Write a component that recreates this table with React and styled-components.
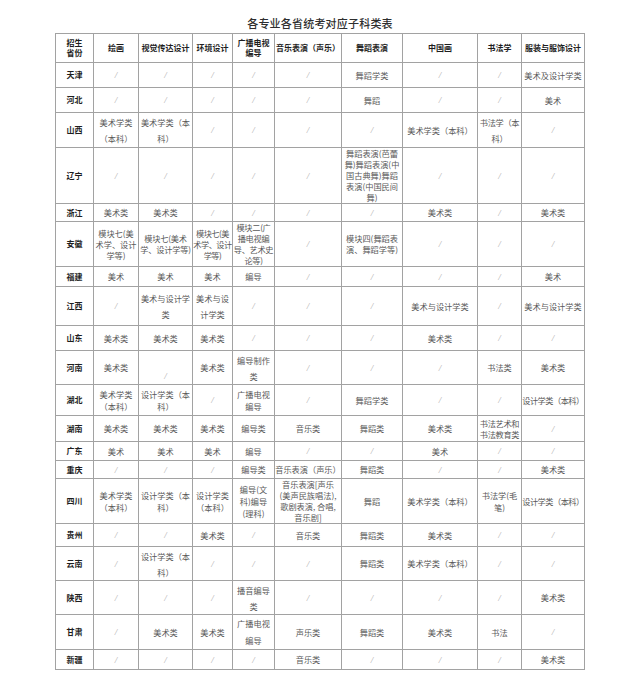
import React from "react";
import styled, { createGlobalStyle } from "styled-components";

const GlobalStyle = createGlobalStyle`
  html, body { margin: 0; padding: 0; background: #ffffff; }
  body { font-family: "Noto Sans CJK SC", "Noto Sans", sans-serif; }
`;

const Page = styled.div`
  width: 640px;
  min-height: 689px;
  background: #fff;
`;

const Title = styled.h1`
  margin: 0 0 4px;
  padding-top: 17px;
  font-size: 11px;
  line-height: 12px;
  font-weight: 500;
  letter-spacing: 0.2px;
  color: #2e2e2e;
  text-align: center;
`;

const Table = styled.table`
  border-collapse: collapse;
  table-layout: fixed;
  width: 529px;
  margin: 0 auto;
`;

const Col = styled.col`
  width: ${(p) => p.$w}px;
`;

const Row = styled.tr`
  height: ${(p) => p.$h}px;
`;

const HeadCell = styled.th`
  border: 1px solid #a2a2a2;
  padding: 0;
  font-size: 8px;
  line-height: 10px;
  font-weight: 700;
  color: #1e1e1e;
  text-align: center;
  vertical-align: middle;
  white-space: nowrap;
  overflow: hidden;
`;

const ProvCell = styled.th`
  border: 1px solid #a2a2a2;
  padding: 0;
  font-size: 8px;
  line-height: 10px;
  font-weight: 700;
  color: #1e1e1e;
  text-align: center;
  vertical-align: middle;
`;

const Cell = styled.td`
  border: 1px solid #a2a2a2;
  padding: 0;
  font-size: 8.2px;
  line-height: ${(p) => p.$lh}px;
  letter-spacing: ${(p) => p.$ls}px;
  color: #5a5a5a;
  text-align: center;
  vertical-align: middle;
  white-space: nowrap;
  overflow: hidden;
`;

const Line = styled.div`
  min-height: ${(p) => p.$lh}px;
`;

const Slash = styled.span`
  color: #a8a8a8;
  font-family: "Liberation Serif", serif;
  font-style: italic;
  font-size: 9px;
  letter-spacing: 0;
`;

const S = "/";

const headers = [
  ["招生", "省份"],
  ["绘画"],
  ["视觉传达设计"],
  ["环境设计"],
  ["广播电视", "编导"],
  ["音乐表演（声乐）"],
  ["舞蹈表演"],
  ["中国画"],
  ["书法学"],
  ["服装与服饰设计"],
];

const widths = [38, 45, 54, 40, 42, 67, 61, 75, 44, 63];

const L = (lines, lh = 11, ls = 0) => ({ lines, lh, ls });
const DESIGN = L(["设计学类（本科）"], 11, -0.5);

const rows = [
  { p: "天津", h: 25, c: [S, S, S, S, S, "舞蹈学类", S, S, "美术及设计学类"] },
  { p: "河北", h: 25, c: [S, S, S, S, S, "舞蹈", S, S, "美术"] },
  {
    p: "山西",
    h: 35,
    c: [L(["美术学类", "（本科）"], 16), L(["美术学类（本", "科）"], 16), S, S, S, S, "美术学类（本科）", L(["书法学（本", "科）"], 16, -0.3), S],
  },
  {
    p: "辽宁",
    h: 55,
    c: [S, S, S, S, S, L(["舞蹈表演(芭蕾", "舞)舞蹈表演(中", "国古典舞)舞蹈", "表演(中国民间", "舞)"]), S, S, S],
  },
  { p: "浙江", h: 18, c: ["美术类", "美术类", S, S, S, S, "美术类", S, "美术类"] },
  {
    p: "安徽",
    h: 44,
    c: [
      L(["模块七(美", "术学、设计", "学等)"]),
      L(["模块七(美术", "学、设计学等)"], 11, -0.2),
      L(["模块七(美", "术学、设计", "学等)"], 11, -0.5),
      L(["模块二(广", "播电视编", "导、艺术史", "论等)"], 11, -0.3),
      S,
      L(["模块四(舞蹈表", "演、舞蹈学等)"]),
      S,
      S,
      S,
    ],
  },
  { p: "福建", h: 20, c: ["美术", "美术", "美术", "编导", S, S, S, S, "美术"] },
  {
    p: "江西",
    h: 39,
    c: [S, L(["美术与设计学", "类"], 16), L(["美术与设", "计学类"], 16), S, S, S, "美术与设计学类", S, "美术与设计学类"],
  },
  { p: "山东", h: 25, c: ["美术类", "美术类", "美术类", S, S, S, "美术类", S, S] },
  {
    p: "河南",
    h: 34,
    c: ["美术类", L(["", "/"], 16), "美术类", L(["编导制作", "类"], 16), S, S, S, "书法类", "美术类"],
  },
  {
    p: "湖北",
    h: 31,
    c: [L(["美术学类", "（本科）"], 12), L(["设计学类（本", "科）"], 12), S, L(["广播电视", "编导"], 12), S, "舞蹈学类", S, S, DESIGN],
  },
  {
    p: "湖南",
    h: 26,
    c: ["美术类", "美术类", "美术类", "编导类", "音乐类", "舞蹈类", "美术类", L(["书法艺术和", "书法教育类"], 11, -0.3), S],
  },
  { p: "广东", h: 19, c: ["美术", "美术", "美术", "编导", S, S, "美术", S, S] },
  { p: "重庆", h: 18, c: [S, S, S, "编导类", "音乐表演（声乐）", "舞蹈类", S, S, "美术类"] },
  {
    p: "四川",
    h: 44,
    c: [
      L(["美术学类", "（本科）"], 12),
      L(["设计学类（本", "科）"], 12),
      L(["设计学类", "（本科）"], 12),
      L(["编导(文", "科)编导", "(理科)"], 12),
      L(["音乐表演[声乐", "(美声民族唱法),", "歌剧表演, 合唱,", "音乐剧]"]),
      "舞蹈",
      "美术学类（本科）",
      L(["书法学(毛", "笔)"], 12),
      DESIGN,
    ],
  },
  { p: "贵州", h: 23, c: [S, S, "美术类", S, "音乐类", "舞蹈类", "美术类", S, S] },
  { p: "云南", h: 34, c: [S, L(["设计学类（本", "科）"], 16), S, S, S, "舞蹈类", "美术学类（本科）", S, S] },
  { p: "陕西", h: 34, c: [S, S, S, L(["播音编导", "类"], 16), S, S, S, S, "美术类"] },
  { p: "甘肃", h: 33, c: [S, "美术类", "美术类", L(["广播电视", "编导"], 17), "声乐类", "舞蹈类", "美术类", "书法", S] },
  { p: "新疆", h: 20, c: [S, S, S, S, "音乐类", S, S, S, "美术类"] },
];

function renderText(t) {
  return t === S ? <Slash>/</Slash> : t;
}

function DataCell({ value }) {
  if (typeof value === "string") {
    return (
      <Cell $lh={11} $ls={0}>
        {renderText(value)}
      </Cell>
    );
  }
  return (
    <Cell $lh={value.lh} $ls={value.ls}>
      {value.lines.map((ln, i) => (
        <Line key={i} $lh={value.lh}>
          {renderText(ln)}
        </Line>
      ))}
    </Cell>
  );
}

export default function App() {
  return (
    <Page>
      <GlobalStyle />
      <Title>各专业各省统考对应子科类表</Title>
      <Table>
        <colgroup>
          {widths.map((w, i) => (
            <Col key={i} $w={w} />
          ))}
        </colgroup>
        <thead>
          <Row $h={29}>
            {headers.map((h, i) => (
              <HeadCell key={i}>
                {h.map((ln, j) => (
                  <div key={j}>{ln}</div>
                ))}
              </HeadCell>
            ))}
          </Row>
        </thead>
        <tbody>
          {rows.map((r) => (
            <Row key={r.p} $h={r.h}>
              <ProvCell>{r.p}</ProvCell>
              {r.c.map((v, i) => (
                <DataCell key={i} value={v} />
              ))}
            </Row>
          ))}
        </tbody>
      </Table>
    </Page>
  );
}
